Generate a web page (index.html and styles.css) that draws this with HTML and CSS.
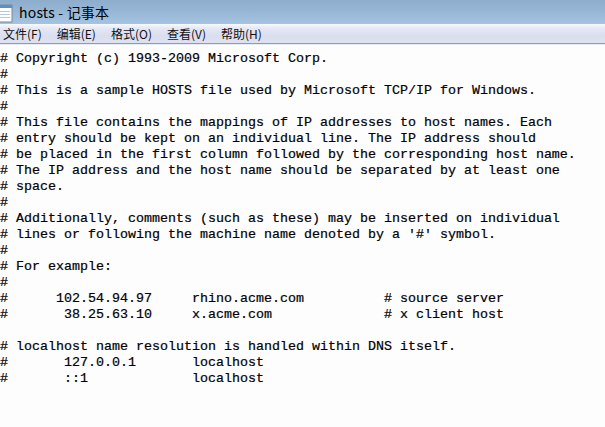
FILE: index.html
```html
<!DOCTYPE html>
<html lang="zh-CN">
<head>
    <meta charset="UTF-8">
    <title>hosts - 记事本</title>
    <link rel="stylesheet" href="styles.css">
</head>
<body>
    <div class="window">
        <div class="title-bar">
            <svg class="app-icon" width="14" height="20" viewBox="0 0 14 20">
                <rect x="-4" y="2" width="16" height="17" fill="#fdfdfd" stroke="#7a8796" stroke-width="1"/>
                <rect x="-4" y="2" width="16" height="3" fill="#5b8fc9"/>
                <line x1="-2" y1="8.5" x2="10" y2="8.5" stroke="#b9c7d8"/>
                <line x1="-2" y1="11.5" x2="10" y2="11.5" stroke="#b9c7d8"/>
                <line x1="-2" y1="14.5" x2="10" y2="14.5" stroke="#b9c7d8"/>
            </svg>
            <span class="title-text">hosts - 记事本</span>
        </div>
        <div class="menu-bar">
            <span class="menu-item">文件(F)</span>
            <span class="menu-item">编辑(E)</span>
            <span class="menu-item">格式(O)</span>
            <span class="menu-item">查看(V)</span>
            <span class="menu-item">帮助(H)</span>
        </div>
        <pre class="editor"># Copyright (c) 1993-2009 Microsoft Corp.
#
# This is a sample HOSTS file used by Microsoft TCP/IP for Windows.
#
# This file contains the mappings of IP addresses to host names. Each
# entry should be kept on an individual line. The IP address should
# be placed in the first column followed by the corresponding host name.
# The IP address and the host name should be separated by at least one
# space.
#
# Additionally, comments (such as these) may be inserted on individual
# lines or following the machine name denoted by a '#' symbol.
#
# For example:
#
#      102.54.94.97     rhino.acme.com          # source server
#       38.25.63.10     x.acme.com              # x client host

# localhost name resolution is handled within DNS itself.
#       127.0.0.1       localhost
#       ::1             localhost</pre>
    </div>
</body>
</html>
```

FILE: styles.css
```css
* { margin: 0; padding: 0; box-sizing: border-box; }
html, body { width: 605px; height: 427px; overflow: hidden; background: #fff; }
body { font-family: "Noto Sans CJK SC", "Noto Sans", sans-serif; }
.window { display: flex; flex-direction: column; height: 427px; }
.title-bar { height: 24px; display: flex; align-items: center; gap: 5px; background: linear-gradient(180deg, #8eadcd 0%, #97b7d7 50%, #a6c4e1 100%); }
.app-icon { flex: none; margin-top: 1px; }
.title-text { font-size: 14px; color: #000; letter-spacing: 0.2px; }
.menu-bar { height: 20px; display: flex; align-items: center; padding-left: 3px; background: linear-gradient(180deg, #f7f9fe 0%, #e4e7f4 25%, #dadeef 60%, #dde1f0 100%); border-bottom: 1px solid #8f9ea9; }
.menu-item { font-size: 12px; color: #111; margin-right: 15px; }
.editor { flex: 1; padding: 6px 0 0 0; font-family: "Liberation Mono", monospace; font-size: 13.33px; line-height: 16px; color: #000; background: #fdfdfd; border-top: 1px solid #e6edf2; -webkit-text-stroke: 0.2px #000; }
```
